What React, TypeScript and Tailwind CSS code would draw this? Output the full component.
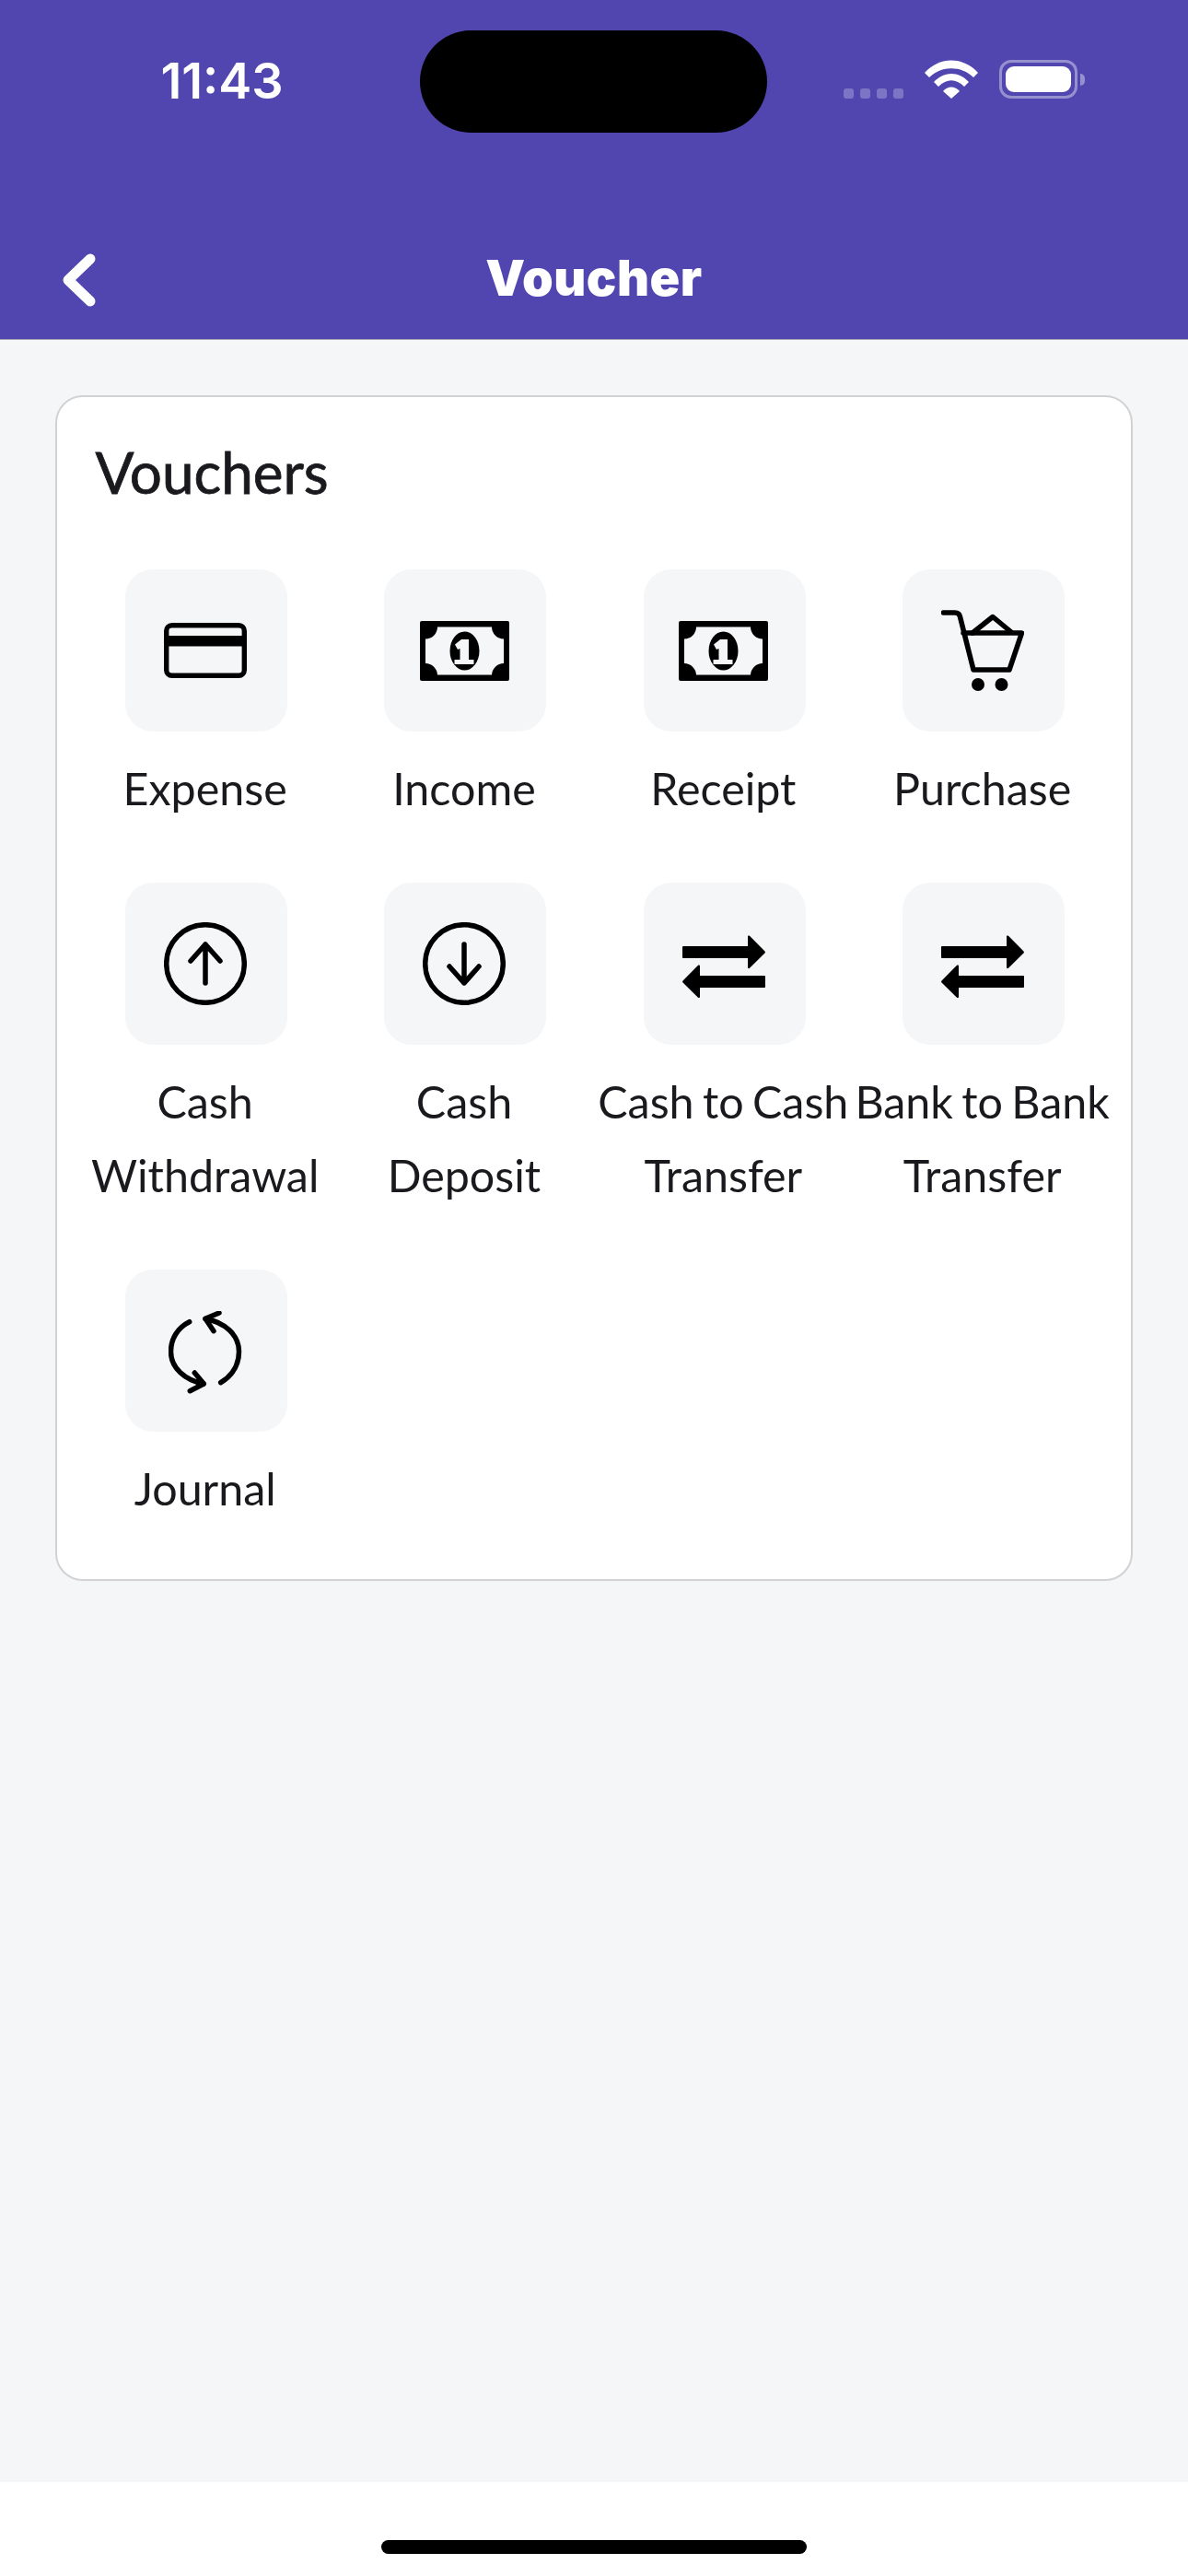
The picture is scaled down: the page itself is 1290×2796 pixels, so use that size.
import React from "react";

const Bill = () => (
  <svg width="97" height="65" viewBox="0 0 97 65" fill="none">
    <path fillRule="evenodd" clipRule="evenodd" fill="#000" d="M2 0H95a2 2 0 0 1 2 2V63a2 2 0 0 1-2 2H2a2 2 0 0 1-2-2V2a2 2 0 0 1 2-2ZM19 6.500H78A13 13 0 0 0 91 19.500V46A13 13 0 0 0 78 58.500H19A13 13 0 0 0 6 46V19.500A13 13 0 0 0 19 6.500Z" />
    <ellipse cx="48.500" cy="32.500" rx="16" ry="21" fill="#000" />
    <path fill="#f5f6f8" d="M45 20H53V42H58.500V47H37.500V42H43.500V30L41 31L38 25.500Z" />
  </svg>
);

const Card = () => (
  <svg width="90" height="60" viewBox="0 0 90 60" fill="none">
    <rect x="2.700" y="2.700" width="84.600" height="54.600" rx="6" stroke="#000" strokeWidth="5.400" />
    <rect x="2" y="14" width="86" height="11.500" fill="#000" />
  </svg>
);

const Cart = () => (
  <svg width="90" height="88" viewBox="0 0 90 88" fill="none" stroke="#000" strokeWidth="5.500" strokeLinecap="round" strokeLinejoin="round">
    <path d="M2.500 3H15C18 3 20 5 20.500 7.500L35 65H74L87.500 25H24" />
    <path d="M34 25L56 7.500L76 24" />
    <circle cx="40" cy="81" r="7" fill="#000" stroke="none" />
    <circle cx="65.500" cy="81" r="7" fill="#000" stroke="none" />
  </svg>
);

const ArrowCircle = ({ up }: { up: boolean }) => (
  <svg width="90" height="90" viewBox="0 0 90 90" fill="none" stroke="#000" strokeWidth="5.500" strokeLinecap="round" strokeLinejoin="round">
    <circle cx="45" cy="45" r="42.300" />
    {up ? <path d="M45 66V24M29 42L45 24L61 42" /> : <path d="M45 24V66M29 48L45 66L61 48" />}
  </svg>
);

const Swap = () => (
  <svg className="mt-[6px]" width="90" height="68" viewBox="0 0 90 68" fill="#000">
    <path d="M1 12H71V1.500C71 .5 72 0 73 .8L89.500 17.500C90 18 90 19 89.500 19.500L73 35.800C72 36.600 71 36 71 35V25H1C.5 25 0 24.500 0 24V13C0 12.500 .5 12 1 12Z" />
    <path d="M89 44H19V33.500C19 32.500 18 32 17 32.800L.5 49.500C0 50 0 51 .5 51.500L17 67.800C18 68.600 19 68 19 67V57H89C89.500 57 90 56.500 90 56V45C90 44.500 89.500 44 89 44Z" />
  </svg>
);

const Sync = () => (
  <svg className="mt-[3px]" width="80" height="90" viewBox="0 0 80 90" fill="none" stroke="#000" strokeWidth="5.500" strokeLinecap="round" strokeLinejoin="round">
    <path d="M22.700 11.700C10 18 2.500 30 2.500 44C2.500 62 18 75 38 79" />
    <path d="M28.300 67L38.300 79L23.300 86.700" />
    <path d="M56.700 77.700C69 70 76.500 58 76.500 44C76.500 26 61 12 40 8.500" />
    <path d="M49 21.700L40 8.300L55 2" />
  </svg>
);

type Item = { label: string[]; icon: React.ReactNode };

const items: Item[] = [
  { label: ["Expense"], icon: <Card /> },
  { label: ["Income"], icon: <Bill /> },
  { label: ["Receipt"], icon: <Bill /> },
  { label: ["Purchase"], icon: <Cart /> },
  { label: ["Cash", "Withdrawal"], icon: <ArrowCircle up /> },
  { label: ["Cash", "Deposit"], icon: <ArrowCircle up={false} /> },
  { label: ["Cash to Cash", "Transfer"], icon: <Swap /> },
  { label: ["Bank to Bank", "Transfer"], icon: <Swap /> },
  { label: ["Journal"], icon: <Sync /> },
];

export default function App() {
  return (
    <div className="flex h-[2796px] w-[1290px] flex-col overflow-hidden bg-[#f5f6f8] font-['Lato',sans-serif]">
      <header className="flex h-[369px] shrink-0 flex-col border-b border-[#a9a9b5] bg-[#5146b0] text-white">
        <div className="mt-[33px] flex h-[111px] items-start">
          <div className="flex w-[456px] justify-center pl-[26px] pt-[25px]">
            <span className="font-['Inter',sans-serif] text-[54px] font-semibold leading-[60px]">11:43</span>
          </div>
          <div className="h-[111px] w-[377px] shrink-0 rounded-[56px] bg-black" />
          <div className="flex items-end pl-[83px] pt-[32px]">
            <div className="flex gap-[7px]">
              <span className="h-[11px] w-[11px] rounded-[3px] bg-white/25" />
              <span className="h-[11px] w-[11px] rounded-[3px] bg-white/25" />
              <span className="h-[11px] w-[11px] rounded-[3px] bg-white/25" />
              <span className="h-[11px] w-[11px] rounded-[3px] bg-white/25" />
            </div>
            <svg className="ml-[23px]" width="58" height="42" viewBox="0 0 58 42" fill="#fff">
              <path d="M0 14C16 -4 42 -4 58 14L53 19C40 6 18 6 5 19Z" />
              <path d="M10 24C21 12 37 12 48 24L43 29C34 20 24 20 15 29Z" />
              <path d="M20 34C25 28 33 28 38 34L29 42Z" />
            </svg>
            <div className="ml-[23px] flex items-center">
              <div className="flex h-[42px] w-[85px] items-center justify-center rounded-[13px] border-[3px] border-white/40 p-[4px]">
                <div className="h-full w-full rounded-[9px] bg-white" />
              </div>
              <div className="ml-[3px] h-[13px] w-[5px] rounded-r-full bg-white/40" />
            </div>
          </div>
        </div>
        <div className="relative mt-[123px] flex h-[70px] items-center justify-center">
          <svg className="absolute left-[66px] top-[8px]" width="39" height="58" viewBox="0 0 39 58" fill="none" stroke="#fff" strokeWidth="11" strokeLinecap="round" strokeLinejoin="round">
            <path d="M32 6L8 29L32 52" />
          </svg>
          <h1 className="font-['Inter',sans-serif] text-[54px] font-black leading-[70px] tracking-[0.5px]">Voucher</h1>
        </div>
      </header>

      <main className="flex-1 px-[60px] pt-[60px]">
        <section className="h-[1287px] w-[1170px] rounded-[30px] border-2 border-[#d2d2d4] bg-white px-[21.500px]">
          <h2 className="pl-[20px] pt-[43px] text-[62px] leading-[76px] text-[#1a1a1e] [-webkit-text-stroke:0.8px_#1a1a1e]">Vouchers</h2>
          <div className="mt-[68px] grid grid-cols-[repeat(4,281.330px)]">
            {items.map((it, i) => (
              <div key={i} className="flex flex-col items-center">
                <div className="flex h-[176px] w-[176px] items-center justify-center rounded-[30px] bg-[#f5f6f8] pr-[2px]">{it.icon}</div>
                <div className="mb-[63px] mt-[21px] whitespace-nowrap pr-[3px] text-center text-[48.400px] leading-[80px] text-[#1a1a1e] [word-spacing:-3px]">
                  {it.label.map((l) => (
                    <div key={l}>{l}</div>
                  ))}
                </div>
              </div>
            ))}
          </div>
        </section>
      </main>

      <footer className="flex h-[102px] shrink-0 items-start justify-center bg-white pt-[63px]">
        <div className="h-[15px] w-[462px] rounded-full bg-black" />
      </footer>
    </div>
  );
}
